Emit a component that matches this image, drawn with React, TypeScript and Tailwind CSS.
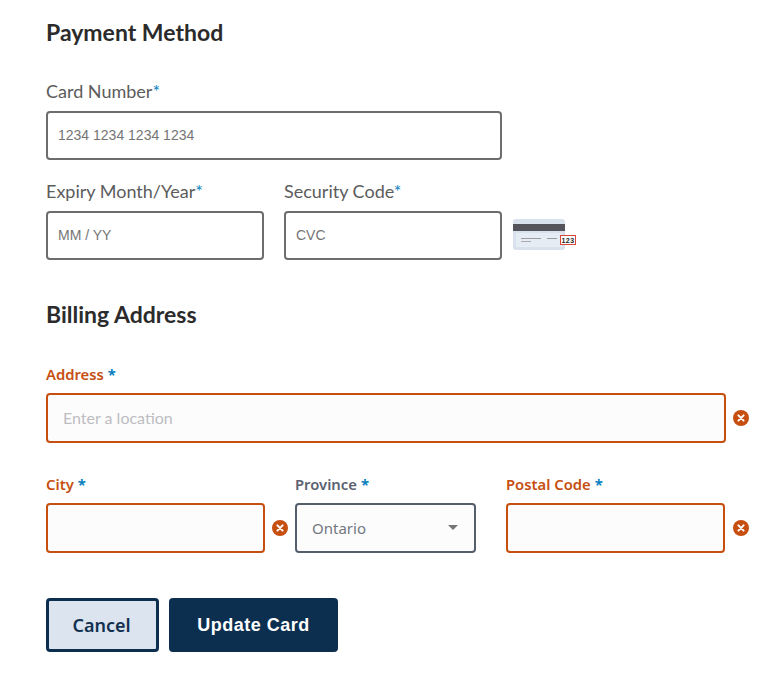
const lato = "font-['Lato',sans-serif]";
const helv = "font-['Liberation_Sans',Arial,sans-serif]";
const noto = "font-['Noto_Sans',sans-serif]";

function ErrorIcon() {
  return (
    <svg width="16" height="16" viewBox="0 0 16 16" className="shrink-0">
      <circle cx="8" cy="8" r="8" fill="#c64f10" />
      <path d="M5.4 5.4l5.2 5.2M10.6 5.4l-5.2 5.2" stroke="#fff" strokeWidth="2" strokeLinecap="round" />
    </svg>
  );
}

function CardIcon() {
  return (
    <svg width="64" height="32" viewBox="0 0 64 32" className="shrink-0">
      <rect x="0" y="0" width="52" height="31" rx="3" fill="#d8e1ec" />
      <rect x="0" y="5" width="52" height="7" fill="#55545a" />
      <rect x="3" y="14" width="46" height="14" fill="#e6ecf3" />
      <rect x="8" y="19" width="20" height="1" fill="#9a9da3" />
      <rect x="8" y="22" width="10" height="1" fill="#a9acb2" />
      <rect x="34" y="19" width="10" height="1" fill="#9a9da3" />
      <rect x="47.5" y="16.5" width="15" height="9" fill="#fff" stroke="#d9453b" strokeWidth="1" />
      <text x="55" y="23.5" textAnchor="middle" fontSize="7" fontWeight="700" letterSpacing="0.4" fontFamily="Liberation Sans" fill="#222">123</text>
    </svg>
  );
}

function Star({ spaced }: { spaced?: boolean }) {
  return <span className={`text-[#0a7fc0] ${spaced ? 'ml-1 font-bold' : ''}`}>*</span>;
}

function CardField({ label, placeholder, className }: { label: string; placeholder: string; className: string }) {
  return (
    <div className={className}>
      <label className={`block h-[20px] text-[18px] leading-[20px] text-[#5c5c5c] ${lato}`}>
        {label}<Star />
      </label>
      <input
        placeholder={placeholder}
        className={`mt-[10px] block h-[49px] w-full rounded-[4px] border-2 border-[#6e6c6e] bg-white px-[10px] pb-[2px] text-[14px] outline-none placeholder:text-[#757575] ${helv}`}
      />
    </div>
  );
}

function ErrorLabel({ children }: { children: string }) {
  return (
    <label className={`block h-[20px] text-[14.8px] leading-[20px] font-semibold text-[#c64f10] ${noto}`}>
      {children}<Star spaced />
    </label>
  );
}

function ErrorInput({ placeholder }: { placeholder?: string }) {
  return (
    <input
      placeholder={placeholder}
      className={`block h-[50px] w-full rounded-[4px] border-2 border-[#c64f10] bg-[#fcfcfc] px-[15px] pb-[2px] text-[16px] outline-none placeholder:text-[#bdbdc2] ${lato}`}
    />
  );
}

export default function App() {
  return (
    <div className="min-h-[675px] w-[766px] bg-white pl-[46px] pt-[19px]">
      <h2 className={`h-[26px] text-[23px] leading-[26px] font-bold text-[#2b2b2b] ${lato}`}>Payment Method</h2>

      <div className="mt-[36px] flex w-[456px] flex-col gap-[21px]">
        <CardField label="Card Number" placeholder="1234 1234 1234 1234" className="w-full" />
        <div className="flex items-end gap-[20px]">
          <CardField label="Expiry Month/Year" placeholder="MM / YY" className="w-[218px]" />
          <div className="relative w-[218px]">
            <CardField label="Security Code" placeholder="CVC" className="w-full" />
            <div className="absolute left-[229px] top-[38px]">
              <CardIcon />
            </div>
          </div>
        </div>
      </div>

      <h2 className={`mt-[41px] h-[26px] text-[23px] leading-[26px] font-bold text-[#2b2b2b] ${lato}`}>Billing Address</h2>

      <div className="mt-[37px]">
        <ErrorLabel>Address</ErrorLabel>
        <div className="mt-[9px] flex items-center gap-[7px]">
          <div className="w-[680px]">
            <ErrorInput placeholder="Enter a location" />
          </div>
          <ErrorIcon />
        </div>
      </div>

      <div className="mt-[31px] flex">
        <div className="w-[219px]">
          <ErrorLabel>City</ErrorLabel>
          <div className="mt-[9px]">
            <ErrorInput />
          </div>
        </div>
        <div className="ml-[7px] mt-[29px] flex h-[50px] w-[16px] items-center">
          <ErrorIcon />
        </div>
        <div className="ml-[7px] w-[181px]">
          <label className={`block h-[20px] text-[14.8px] leading-[20px] font-semibold text-[#5a6270] ${noto}`}>
            Province<Star spaced />
          </label>
          <div className={`mt-[9px] flex h-[50px] items-center justify-between rounded-[4px] border-2 border-[#565d6b] bg-[#fcfcfc] pl-[15px] pr-[16px] text-[15px] text-[#737780] ${noto}`}>
            <span>Ontario</span>
            <span className="mb-[2px] h-0 w-0 border-x-[5px] border-t-[5px] border-x-transparent border-t-[#757575]" />
          </div>
        </div>
        <div className="ml-[30px] w-[219px]">
          <ErrorLabel>Postal Code</ErrorLabel>
          <div className="mt-[9px]">
            <ErrorInput />
          </div>
        </div>
        <div className="ml-[8px] mt-[29px] flex h-[50px] w-[16px] items-center">
          <ErrorIcon />
        </div>
      </div>

      <div className="mt-[45px] flex gap-[10px]">
        <button className={`h-[54px] w-[113px] rounded-[4px] border-[3px] border-[#0c2f50] bg-[#dce4f0] pr-[2px] text-[18px] font-semibold text-[#12304f] ${noto}`}>
          Cancel
        </button>
        <button className={`h-[54px] w-[169px] rounded-[4px] bg-[#0c2f50] text-[18px] font-bold tracking-[0.5px] text-white ${helv}`}>
          Update Card
        </button>
      </div>
    </div>
  );
}
